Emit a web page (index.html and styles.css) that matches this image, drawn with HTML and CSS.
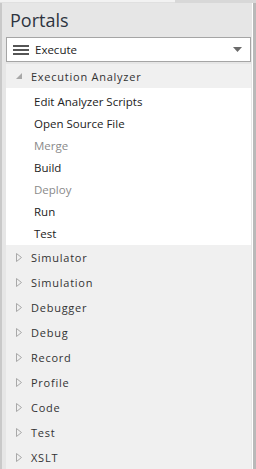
FILE: index.html
```html
<!DOCTYPE html>
<html>

<head>
	<title>Portals</title>
	<meta charset="utf-8" />
	<link rel="stylesheet" href="styles.css">
</head>

<body>
	<div class="topstrip"><div class="topstrip-tab"></div></div>
	<div class="frame">
		<div class="panel">
			<h1 class="title">Portals</h1>
			<div class="dropdown">
				<span class="burger"><i></i><i></i><i></i></span>
				<span class="dropdown-text">Execute</span>
				<svg class="caret" width="9" height="6" viewBox="0 0 9 6"><path d="M0 0 H9 L4.5 5 Z" fill="#6a6a6a" /></svg>
			</div>
			<div class="group open">
				<div class="group-head">
					<svg class="arrow" width="6" height="6" viewBox="0 0 6 6"><path d="M6 0 V6 H0 Z" fill="#a8a8a8" /></svg>
					<span>Execution Analyzer</span>
				</div>
				<ul class="items">
					<li>Edit Analyzer Scripts</li>
					<li>Open Source File</li>
					<li class="disabled">Merge</li>
					<li>Build</li>
					<li class="disabled">Deploy</li>
					<li>Run</li>
					<li>Test</li>
				</ul>
			</div>
			<div class="group">
				<div class="group-head">
					<svg class="arrow" width="6" height="9" viewBox="0 0 6 9"><path d="M0.5 0.5 L5.5 4.5 L0.5 8.5 Z" fill="none" stroke="#a8a8a8" /></svg>
					<span>Simulator</span>
				</div>
			</div>
			<div class="group">
				<div class="group-head">
					<svg class="arrow" width="6" height="9" viewBox="0 0 6 9"><path d="M0.5 0.5 L5.5 4.5 L0.5 8.5 Z" fill="none" stroke="#a8a8a8" /></svg>
					<span>Simulation</span>
				</div>
			</div>
			<div class="group">
				<div class="group-head">
					<svg class="arrow" width="6" height="9" viewBox="0 0 6 9"><path d="M0.5 0.5 L5.5 4.5 L0.5 8.5 Z" fill="none" stroke="#a8a8a8" /></svg>
					<span>Debugger</span>
				</div>
			</div>
			<div class="group">
				<div class="group-head">
					<svg class="arrow" width="6" height="9" viewBox="0 0 6 9"><path d="M0.5 0.5 L5.5 4.5 L0.5 8.5 Z" fill="none" stroke="#a8a8a8" /></svg>
					<span>Debug</span>
				</div>
			</div>
			<div class="group">
				<div class="group-head">
					<svg class="arrow" width="6" height="9" viewBox="0 0 6 9"><path d="M0.5 0.5 L5.5 4.5 L0.5 8.5 Z" fill="none" stroke="#a8a8a8" /></svg>
					<span>Record</span>
				</div>
			</div>
			<div class="group">
				<div class="group-head">
					<svg class="arrow" width="6" height="9" viewBox="0 0 6 9"><path d="M0.5 0.5 L5.5 4.5 L0.5 8.5 Z" fill="none" stroke="#a8a8a8" /></svg>
					<span>Profile</span>
				</div>
			</div>
			<div class="group">
				<div class="group-head">
					<svg class="arrow" width="6" height="9" viewBox="0 0 6 9"><path d="M0.5 0.5 L5.5 4.5 L0.5 8.5 Z" fill="none" stroke="#a8a8a8" /></svg>
					<span>Code</span>
				</div>
			</div>
			<div class="group">
				<div class="group-head">
					<svg class="arrow" width="6" height="9" viewBox="0 0 6 9"><path d="M0.5 0.5 L5.5 4.5 L0.5 8.5 Z" fill="none" stroke="#a8a8a8" /></svg>
					<span>Test</span>
				</div>
			</div>
			<div class="group">
				<div class="group-head">
					<svg class="arrow" width="6" height="9" viewBox="0 0 6 9"><path d="M0.5 0.5 L5.5 4.5 L0.5 8.5 Z" fill="none" stroke="#a8a8a8" /></svg>
					<span>XSLT</span>
				</div>
			</div>
		</div>
	</div>
</body>

</html>
```

FILE: styles.css
```css
/* general styles */
* {
	box-sizing: border-box;
}

body {
	margin: 0;
	width: 256px;
	height: 469px;
	overflow: hidden;
	background-color: #e6e6e6;
	font-family: "Open Sans", "Noto Sans", sans-serif;
	font-size: 11.5px;
	color: #222;
}

/* window chrome */
.topstrip {
	height: 3px;
	background-color: #d8d8d8;
}

.topstrip-tab {
	width: 175px;
	height: 3px;
	background-color: #f2f2f2;
	border-bottom: 1px solid #e0e0e0;
}

.frame {
	display: flex;
	height: 466px;
	border-left: 2px solid #c9c9c9;
	border-right: 3px solid #b9b9b9;
}

.panel {
	flex: 1;
	padding: 0 1px 0 4px;
	border-right: 1px solid #fff;
	background-color: #e6e6e6;
}

/* header */
.title {
	margin: 0;
	padding: 6px 0 5px 4px;
	font-family: "Open Sans", sans-serif;
	font-size: 18px;
	font-weight: normal;
	line-height: 23px;
	color: #2e3440;
}

.dropdown {
	display: flex;
	align-items: center;
	height: 25px;
	padding: 0 8px 0 6px;
	border: 1px solid #a5a5a5;
	background-color: #fff;
}

.burger {
	display: flex;
	flex-direction: column;
	gap: 2px;
	width: 16px;
	margin-right: 6px;
}

.burger i {
	display: block;
	height: 2px;
	background-color: #555;
}

.dropdown-text {
	flex: 1;
	color: #222;
}

/* groups */
.group {
	background-color: #f0f0f0;
}

.group-head {
	display: flex;
	align-items: center;
	height: 25px;
	padding-left: 10px;
	font-size: 11px;
	letter-spacing: 0.75px;
	color: #333;
}

.arrow {
	margin-right: 9px;
}

.open .group-head {
	height: 24px;
	margin-top: 2px;
}

.items {
	margin: 0;
	padding: 3px 0 0 28px;
	list-style: none;
	background-color: #fff;
}

.items li {
	height: 22px;
	line-height: 22px;
	color: #222;
}

.items li.disabled {
	color: #8a8a8a;
}
```
